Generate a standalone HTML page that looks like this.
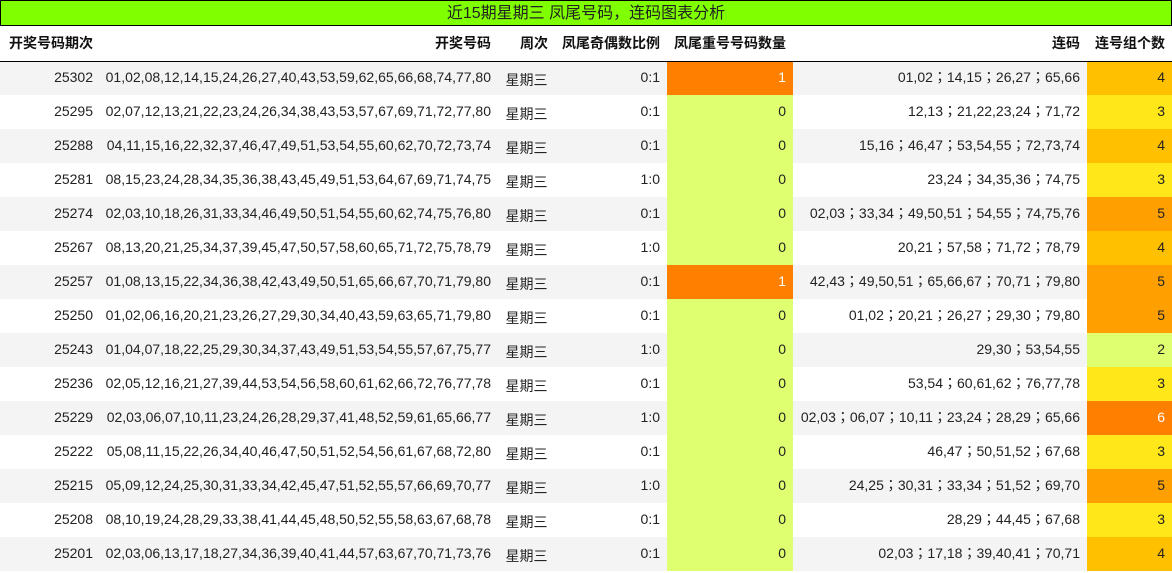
<!DOCTYPE html>
<html><head><meta charset="utf-8"><style>
body{margin:0;width:1172px;height:573px;overflow:hidden;background:#fff;font-family:"Liberation Sans","Noto Sans CJK TC",sans-serif;font-size:14px;color:#222}
.title{position:absolute;left:0;top:0;width:1170px;height:24px;background:#7fff00;border:1px solid #000;text-align:center;line-height:25px;font-size:16px;color:#222;font-family:"Liberation Sans","Noto Sans CJK SC",sans-serif}
table{position:absolute;left:0;top:26px;border-collapse:collapse;table-layout:fixed;width:1172px}
th{height:35px;line-height:16px;font-weight:bold;text-align:right;padding:0 7px 0 0;border-bottom:1px solid #000;box-sizing:border-box;font-size:14px;color:#111;font-family:"Liberation Sans","Noto Sans CJK SC",sans-serif}
td{height:34px;line-height:16px;box-sizing:border-box;padding:0 7px 2px 0;text-align:right;white-space:nowrap;overflow:hidden}
tr:nth-child(odd) td{background:#f4f4f4}
td.w{text-align:center;padding:4px 0 0 0;font-family:"Liberation Sans","Noto Sans CJK SC",sans-serif}
td.o{background:#ff8000!important;color:#fff}
td.g{background:#e0ff70!important}
td.c4{background:#ffc000!important}
td.c3{background:#ffe71a!important}
td.c5{background:#ffa000!important}
td.c6{background:#ff8000!important;color:#fff}
td.c2{background:#e0ff70!important}
</style></head><body>
<div class="title">近15期星期三 凤尾号码，连码图表分析</div>
<table>
<colgroup><col style="width:100px"><col style="width:398px"><col style="width:57px"><col style="width:112px"><col style="width:126px"><col style="width:294px"><col style="width:85px"></colgroup>
<thead><tr><th>开奖号码期次</th><th>开奖号码</th><th>周次</th><th>凤尾奇偶数比例</th><th>凤尾重号号码数量</th><th>连码</th><th>连号组个数</th></tr></thead>
<tbody>
<tr><td>25302</td><td>01,02,08,12,14,15,24,26,27,40,43,53,59,62,65,66,68,74,77,80</td><td class="w">星期三</td><td>0:1</td><td class="o">1</td><td>01,02；14,15；26,27；65,66</td><td class="c4">4</td></tr>
<tr><td>25295</td><td>02,07,12,13,21,22,23,24,26,34,38,43,53,57,67,69,71,72,77,80</td><td class="w">星期三</td><td>0:1</td><td class="g">0</td><td>12,13；21,22,23,24；71,72</td><td class="c3">3</td></tr>
<tr><td>25288</td><td>04,11,15,16,22,32,37,46,47,49,51,53,54,55,60,62,70,72,73,74</td><td class="w">星期三</td><td>0:1</td><td class="g">0</td><td>15,16；46,47；53,54,55；72,73,74</td><td class="c4">4</td></tr>
<tr><td>25281</td><td>08,15,23,24,28,34,35,36,38,43,45,49,51,53,64,67,69,71,74,75</td><td class="w">星期三</td><td>1:0</td><td class="g">0</td><td>23,24；34,35,36；74,75</td><td class="c3">3</td></tr>
<tr><td>25274</td><td>02,03,10,18,26,31,33,34,46,49,50,51,54,55,60,62,74,75,76,80</td><td class="w">星期三</td><td>0:1</td><td class="g">0</td><td>02,03；33,34；49,50,51；54,55；74,75,76</td><td class="c5">5</td></tr>
<tr><td>25267</td><td>08,13,20,21,25,34,37,39,45,47,50,57,58,60,65,71,72,75,78,79</td><td class="w">星期三</td><td>1:0</td><td class="g">0</td><td>20,21；57,58；71,72；78,79</td><td class="c4">4</td></tr>
<tr><td>25257</td><td>01,08,13,15,22,34,36,38,42,43,49,50,51,65,66,67,70,71,79,80</td><td class="w">星期三</td><td>0:1</td><td class="o">1</td><td>42,43；49,50,51；65,66,67；70,71；79,80</td><td class="c5">5</td></tr>
<tr><td>25250</td><td>01,02,06,16,20,21,23,26,27,29,30,34,40,43,59,63,65,71,79,80</td><td class="w">星期三</td><td>0:1</td><td class="g">0</td><td>01,02；20,21；26,27；29,30；79,80</td><td class="c5">5</td></tr>
<tr><td>25243</td><td>01,04,07,18,22,25,29,30,34,37,43,49,51,53,54,55,57,67,75,77</td><td class="w">星期三</td><td>1:0</td><td class="g">0</td><td>29,30；53,54,55</td><td class="c2">2</td></tr>
<tr><td>25236</td><td>02,05,12,16,21,27,39,44,53,54,56,58,60,61,62,66,72,76,77,78</td><td class="w">星期三</td><td>0:1</td><td class="g">0</td><td>53,54；60,61,62；76,77,78</td><td class="c3">3</td></tr>
<tr><td>25229</td><td>02,03,06,07,10,11,23,24,26,28,29,37,41,48,52,59,61,65,66,77</td><td class="w">星期三</td><td>1:0</td><td class="g">0</td><td>02,03；06,07；10,11；23,24；28,29；65,66</td><td class="c6">6</td></tr>
<tr><td>25222</td><td>05,08,11,15,22,26,34,40,46,47,50,51,52,54,56,61,67,68,72,80</td><td class="w">星期三</td><td>0:1</td><td class="g">0</td><td>46,47；50,51,52；67,68</td><td class="c3">3</td></tr>
<tr><td>25215</td><td>05,09,12,24,25,30,31,33,34,42,45,47,51,52,55,57,66,69,70,77</td><td class="w">星期三</td><td>1:0</td><td class="g">0</td><td>24,25；30,31；33,34；51,52；69,70</td><td class="c5">5</td></tr>
<tr><td>25208</td><td>08,10,19,24,28,29,33,38,41,44,45,48,50,52,55,58,63,67,68,78</td><td class="w">星期三</td><td>0:1</td><td class="g">0</td><td>28,29；44,45；67,68</td><td class="c3">3</td></tr>
<tr><td>25201</td><td>02,03,06,13,17,18,27,34,36,39,40,41,44,57,63,67,70,71,73,76</td><td class="w">星期三</td><td>0:1</td><td class="g">0</td><td>02,03；17,18；39,40,41；70,71</td><td class="c4">4</td></tr>
</tbody></table>
</body></html>
